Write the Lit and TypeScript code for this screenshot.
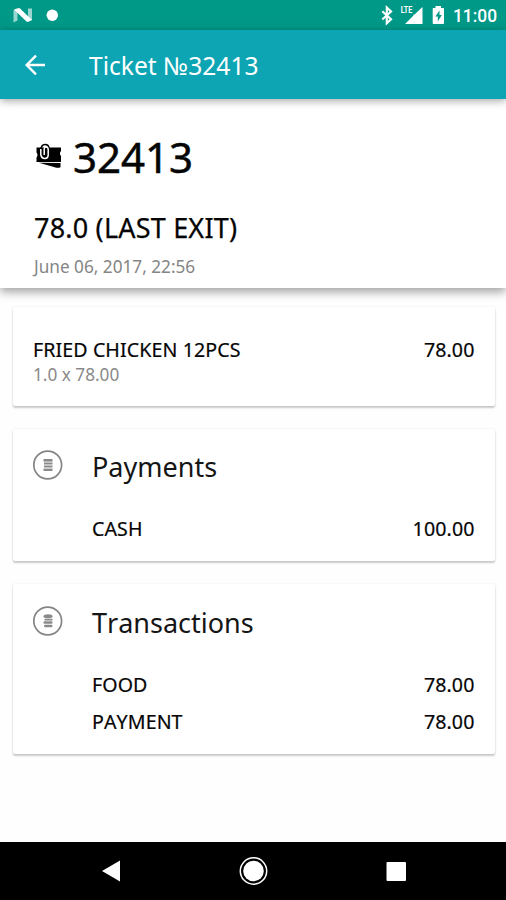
import { LitElement, html, css, svg } from "lit";
import { customElement, property } from "lit/decorators.js";

type Row = { name: string; amount: string };

@customElement("status-bar")
class StatusBar extends LitElement {
  static styles = css`
    :host { display: flex; align-items: center; height: 30px; background: #009887; color: #fff; }
    svg { display: block; width: 506px; height: 30px; fill: #fff; }
    .lte { font: 700 9px Roboto, sans-serif; }
    .clock { font: 500 18.5px Roboto, sans-serif; }
  `;
  render() {
    return html`<svg viewBox="0 0 506 30">
      <path opacity=".6" d="M13.500 10.500l4-2.500v12.500l-4 2zM28 8.500h4v11.500l-4 2z" />
      <path d="M14 9.500l5.500-1.500 12.500 12-5 2z" />
      <circle cx="52.300" cy="15.300" r="5.700" />
      <path fill="none" stroke="#fff" stroke-width="2.200" d="M382.300 11.300l8.700 8-4.200 4V7.500l4.200 4-8.700 8" />
      <text class="lte" x="400.800" y="13.300" textLength="11.500" lengthAdjust="spacingAndGlyphs">LTE</text>
      <path d="M422.500 7v17H405l8.500-8.500v-1h1z" />
      <path fill-rule="evenodd" d="M435.500 6h5.500v2h2.200q.8 0 .8.800v14.400q0 .8-.8.800h-9.700q-.8 0-.8-.8V8.800q0-.8.800-.8h2zM439.500 10.500l-4.200 6h2.500v5l4-6.500h-2.300z" />
      <text class="clock" x="453" y="22.300" textLength="44" lengthAdjust="spacingAndGlyphs">11:00</text>
    </svg>`;
  }
}

@customElement("coin-badge")
class CoinBadge extends LitElement {
  @property({ type: Boolean }) rounded = false;
  static styles = css`
    :host { display: block; width: 30px; height: 30px; }
    svg { display: block; width: 30px; height: 30px; }
  `;
  render() {
    const plain = svg`<g fill="#8a8a8a"><rect x="10.500" y="9" width="9" height="2.600"/><rect x="11" y="12.500" width="8.500" height="2"/><rect x="11" y="15.500" width="8.500" height="2"/><rect x="10.500" y="18.600" width="9" height="2.400"/></g>`;
    const round = svg`<g fill="#8a8a8a"><ellipse cx="15" cy="10.300" rx="4.500" ry="2"/><rect x="11.500" y="12.800" width="8" height="1.700"/><rect x="10.500" y="15.300" width="9" height="2.500" rx="1"/><rect x="11" y="18.700" width="8.500" height="2.500" rx="1.200"/></g>`;
    return html`<svg viewBox="0 0 30 30">
      <circle cx="14.700" cy="15" r="13.900" fill="none" stroke="#858585" stroke-width="1.700" />
      ${this.rounded ? round : plain}
    </svg>`;
  }
}

@customElement("ledger-card")
class LedgerCard extends LitElement {
  @property() heading = "";
  @property({ type: Boolean }) rounded = false;
  @property({ attribute: false }) rows: Row[] = [];
  static styles = css`
    :host { display: block; box-sizing: border-box; padding: 20px 20.500px 0; background: #fff; border-radius: 2px;
      box-shadow: 0 2px 2px rgba(0,0,0,.2), 0 0 2px rgba(0,0,0,.1); }
    .head { display: flex; align-items: center; gap: 29px; height: 36px; }
    coin-badge { margin-bottom: 4px; }
    .heading { font-size: 27px; line-height: 36px; color: #151515; font-kerning: none; }
    .rows { display: grid; gap: 11px; margin: 31px 0 0 59px; }
    .row { display: flex; justify-content: space-between; font-size: 19.600px; letter-spacing: .1px; line-height: 26px; font-kerning: none; -webkit-text-stroke: .2px; }
  `;
  render() {
    return html`<div class="head"><coin-badge ?rounded=${this.rounded}></coin-badge><span class="heading">${this.heading}</span></div>
      <div class="rows">${this.rows.map((r) => html`<div class="row"><span>${r.name}</span><span>${r.amount}</span></div>`)}</div>`;
  }
}

@customElement("app-root")
class AppRoot extends LitElement {
  static styles = css`
    :host { display: flex; flex-direction: column; height: 900px; overflow: hidden; background: #fefefe; color: #050505;
      font-family: "Noto Sans", "Open Sans", sans-serif; white-space: nowrap; }
    .bar { display: flex; align-items: center; gap: 42px; height: 69px; box-sizing: border-box; padding: 2px 0 0 24px; background: #0da5b4; color: #fff;
      box-shadow: 0 2px 8px rgba(0,0,0,.35); position: relative; z-index: 2; }
    .back { width: 23px; height: 22px; margin-bottom: 2px; }
    .title { font-size: 24.600px; line-height: 34px; }
    .summary { height: 189px; box-sizing: border-box; padding: 33px 34px 0; background: #fff;
      box-shadow: 0 4px 9px rgba(0,0,0,.36); position: relative; z-index: 1; }
    .number { display: flex; align-items: center; gap: 11px; font-size: 42px; line-height: 50px; -webkit-text-stroke: .5px; }
    .ticket { width: 28px; height: 26px; margin-bottom: 2px; }
    .total { margin-top: 28px; font-size: 27px; letter-spacing: .2px; line-height: 36px; -webkit-text-stroke: .25px; }
    .date { margin-top: 9px; font-size: 17.200px; line-height: 24px; color: #858585; }
    .cards { flex: 1; display: flex; flex-direction: column; gap: 23px; padding: 19px 11px 0 12.500px; }
    .item { height: 99px; box-sizing: border-box; padding: 30px 20.500px 0; background: #fff; border-radius: 2px;
      box-shadow: 0 2px 2px rgba(0,0,0,.2), 0 0 2px rgba(0,0,0,.1); }
    .line { display: flex; justify-content: space-between; font-size: 19.600px; letter-spacing: .1px; line-height: 26px; -webkit-text-stroke: .2px; }
    .qty { font-size: 17.200px; line-height: 24px; color: #8a8a8a; }
    .payments { height: 132px; }
    .transactions { height: 170px; padding-top: 20.500px; }
    .nav { height: 58px; background: #000; }
    .nav svg { display: block; width: 506px; height: 58px; fill: #fff; }
  `;
  render() {
    return html`
      <status-bar></status-bar>
      <div class="bar">
        <svg class="back" viewBox="0 0 23 22" fill="none" stroke="#fff" stroke-width="2.400"><path d="M21 11H3M12 1.700L2.700 11l9.300 9.300" /></svg>
        <span class="title">Ticket №32413</span>
      </div>
      <div class="summary">
        <div class="number">
          <svg class="ticket" viewBox="0 0 28 26">
            <path d="M2.500 4.500H27v3.500q-2.200 2.500 0 5V19H2.500v-4.500q2-2.500 0-5z" />
            <path d="M5 19.800L26.500 20v4.200q-2.500 1-5 .2z" />
            <path fill="none" stroke="#000" stroke-width="1.700" d="M7 7q0-5.500 4-5.500t4 4.500" />
            <path fill="none" stroke="#fff" stroke-width="1.500" d="M6.800 6v5.500q.7 4 4 4t3.400-3.500V6.500q-.2-2.500-2-2.500t-2 2V12" />
          </svg>
          <span>32413</span>
        </div>
        <div class="total">78.0 (LAST EXIT)</div>
        <div class="date">June 06, 2017, 22:56</div>
      </div>
      <div class="cards">
        <div class="item">
          <div class="line"><span>FRIED CHICKEN 12PCS</span><span>78.00</span></div>
          <div class="qty">1.0 x 78.00</div>
        </div>
        <ledger-card class="payments" heading="Payments" .rows=${[{ name: "CASH", amount: "100.00" }]}></ledger-card>
        <ledger-card class="transactions" heading="Transactions" rounded .rows=${[{ name: "FOOD", amount: "78.00" }, { name: "PAYMENT", amount: "78.00" }]}></ledger-card>
      </div>
      <div class="nav">
        <svg viewBox="0 0 506 58">
          <path d="M102 29L120 18.500v21z" />
          <circle cx="253.500" cy="29" r="13.200" fill="none" stroke="#fff" stroke-width="1.500" />
          <circle cx="253.500" cy="29" r="10.300" />
          <rect x="386.500" y="20" width="19.500" height="19" rx="1" />
        </svg>
      </div>`;
  }
}
